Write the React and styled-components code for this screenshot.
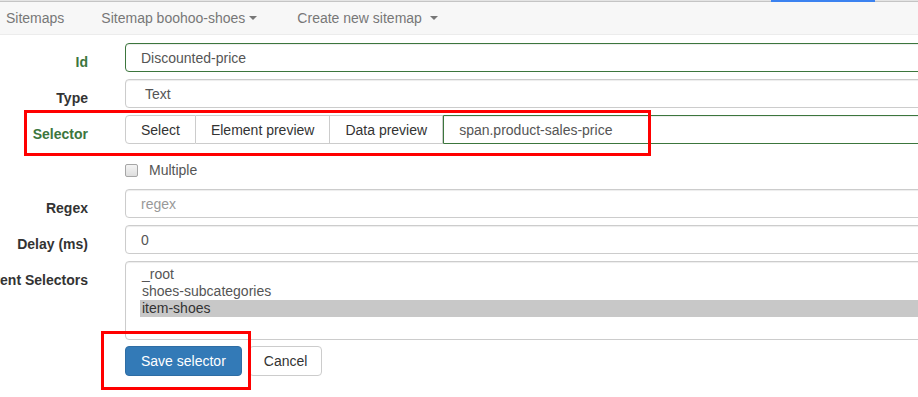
import React from "react";
import styled, { createGlobalStyle } from "styled-components";

const Global = createGlobalStyle`
  html, body {
    margin: 0;
    padding: 0;
    background: #fff;
    overflow: hidden;
  }
  body {
    font-family: "Liberation Sans", Arial, sans-serif;
    font-size: 14px;
    color: #333;
  }
`;

const Page = styled.div`
  position: relative;
  width: 918px;
  height: 397px;
  overflow: hidden;
`;

// browser tab strip at the very top
const TopStrip = styled.div`
  display: flex;
  height: 2px;
`;

const StripLine = styled.div`
  flex: ${(p) => (p.$grow ? "1" : `0 0 ${p.$w}px`)};
  background: linear-gradient(#e4e4e4 0 1px, #c4c4c4 1px 2px);
`;

const ActiveTab = styled.div`
  flex: 0 0 104px;
  background: #3b82f0;
`;

const Navbar = styled.nav`
  display: flex;
  align-items: center;
  gap: 37px;
  height: 32px;
  padding-left: 6px;
  background: #f7f7f7;
  border-bottom: 1px solid #ececec;
`;

const NavItem = styled.span`
  display: flex;
  align-items: center;
  margin-left: ${(p) => p.$shift || 0}px;
  color: #777;
  white-space: nowrap;
  line-height: 20px;
`;

const Caret = styled.span`
  display: inline-block;
  margin-left: ${(p) => p.$gap || 4}px;
  width: 0;
  height: 0;
  border-top: 4px solid #777;
  border-left: 4px solid transparent;
  border-right: 4px solid transparent;
`;

const Form = styled.form`
  width: 1100px;
  padding-top: 8px;
`;

const Row = styled.div`
  display: flex;
  align-items: flex-start;
  gap: 37px;
  margin-bottom: 7px;
`;

const Label = styled.label`
  flex: 0 0 88px;
  min-width: 0;
  display: flex;
  justify-content: flex-end;
  padding-top: 9px;
  line-height: 20px;
  font-weight: bold;
  white-space: nowrap;
  color: ${(p) => (p.$ok ? "#3c763d" : "#333")};
`;

const Input = styled.div`
  flex: 1;
  box-sizing: border-box;
  height: 29px;
  display: flex;
  align-items: center;
  padding-left: ${(p) => p.$pad || 15}px;
  border: 1px solid ${(p) => (p.$ok ? "#3c763d" : "#ccc")};
  border-radius: ${(p) => (p.$flatLeft ? "0 4px 4px 0" : "4px")};
  box-shadow: inset 0 1px 1px rgba(0, 0, 0, 0.075);
  color: ${(p) => (p.$placeholder ? "#999" : "#555")};
  background: #fff;
  white-space: nowrap;
`;

const InputGroup = styled.div`
  flex: 1;
  display: flex;
`;

const GroupButton = styled.span`
  box-sizing: border-box;
  height: 29px;
  display: flex;
  align-items: center;
  padding: 0 15px;
  background: #fff;
  color: #333;
  border: 1px solid #ccc;
  border-left-width: ${(p) => (p.$first ? 1 : 0)}px;
  border-radius: ${(p) => (p.$first ? "4px 0 0 4px" : "0")};
  white-space: nowrap;
`;

const CheckRow = styled.div`
  display: flex;
  align-items: center;
  gap: 11px;
  margin-left: 125px;
  height: 20px;
  padding: 9px 0 2px;
  margin-bottom: 7px;
  color: #555;
`;

const CheckBox = styled.span`
  box-sizing: border-box;
  width: 13px;
  height: 13px;
  border: 1px solid #a6a6a6;
  border-radius: 2px;
  background: linear-gradient(#f4f4f4, #dedede);
`;

const ListBox = styled.div`
  flex: 1;
  box-sizing: border-box;
  height: 79px;
  padding: 4px 0 0 14px;
  border: 1px solid #ccc;
  border-radius: 4px;
  box-shadow: inset 0 1px 1px rgba(0, 0, 0, 0.075);
  color: #555;
`;

const Option = styled.div`
  height: 17px;
  line-height: 17px;
  padding-left: 2px;
  background: ${(p) => (p.$selected ? "#c8c8c8" : "transparent")};
  color: ${(p) => (p.$selected ? "#333" : "#555")};
`;

const Actions = styled.div`
  display: flex;
  gap: 7px;
  margin-left: 125px;
  margin-top: -1px;
`;

const Button = styled.span`
  box-sizing: border-box;
  height: 30px;
  display: flex;
  align-items: center;
  padding: 0 ${(p) => (p.$primary ? 15 : 14)}px;
  border: 1px solid ${(p) => (p.$primary ? "#2e6da4" : "#ccc")};
  border-radius: 4px;
  background: ${(p) => (p.$primary ? "#337ab7" : "#fff")};
  color: ${(p) => (p.$primary ? "#fff" : "#333")};
  white-space: nowrap;
`;

// red annotation frames drawn over the form
const Mark = styled.div`
  position: absolute;
  left: ${(p) => p.$x}px;
  top: ${(p) => p.$y}px;
  width: ${(p) => p.$w}px;
  height: ${(p) => p.$h}px;
  box-sizing: border-box;
  border: 3px solid #ff0000;
  pointer-events: none;
`;

const App = () => {
  return (
    <Page>
      <Global />
      <TopStrip>
        <StripLine $w={771} />
        <ActiveTab />
        <StripLine $grow />
      </TopStrip>
      <Navbar>
        <NavItem>Sitemaps</NavItem>
        <NavItem>
          Sitemap boohoo-shoes
          <Caret />
        </NavItem>
        <NavItem $shift={3}>
          Create new sitemap
          <Caret $gap={8} />
        </NavItem>
      </Navbar>

      <Form>
        <Row>
          <Label $ok>Id</Label>
          <Input $ok>Discounted-price</Input>
        </Row>
        <Row>
          <Label>Type</Label>
          <Input $pad={19}>Text</Input>
        </Row>
        <Row>
          <Label $ok>Selector</Label>
          <InputGroup>
            <GroupButton $first>Select</GroupButton>
            <GroupButton>Element preview</GroupButton>
            <GroupButton>Data preview</GroupButton>
            <Input $ok $flatLeft>span.product-sales-price</Input>
          </InputGroup>
        </Row>
        <CheckRow>
          <CheckBox />
          Multiple
        </CheckRow>
        <Row>
          <Label>Regex</Label>
          <Input $placeholder>regex</Input>
        </Row>
        <Row>
          <Label>Delay (ms)</Label>
          <Input>0</Input>
        </Row>
        <Row>
          <Label>Parent Selectors</Label>
          <ListBox>
            <Option>_root</Option>
            <Option>shoes-subcategories</Option>
            <Option $selected>item-shoes</Option>
          </ListBox>
        </Row>
        <Actions>
          <Button $primary>Save selector</Button>
          <Button>Cancel</Button>
        </Actions>
      </Form>

      <Mark $x={24} $y={110} $w={627} $h={46} />
      <Mark $x={101} $y={331} $w={150} $h={59} />
    </Page>
  );
};

export default App;
